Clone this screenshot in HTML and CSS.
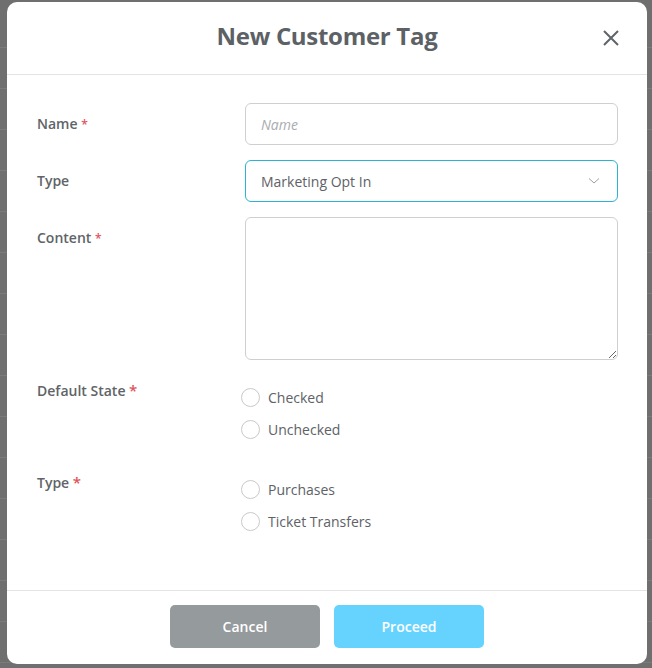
FILE: index.html
```html
<!DOCTYPE html>
<html lang="en">
<head>
  <meta charset="UTF-8">
  <title>New Customer Tag</title>
  <link rel="stylesheet" href="styles.css">
</head>
<body>
  <div class="modal">
    <div class="modal-header">
      <h2>New Customer Tag</h2>
      <span class="close">
        <svg width="16" height="16" viewBox="0 0 16 16"><path d="M1 1 L15 15 M15 1 L1 15" stroke="#5f6468" stroke-width="2" fill="none"/></svg>
      </span>
    </div>
    <div class="modal-body">
      <div class="row">
        <label>Name <span class="req">*</span></label>
        <input type="text" placeholder="Name">
      </div>
      <div class="row">
        <label>Type</label>
        <div class="select">
          <span>Marketing Opt In</span>
          <svg width="12" height="8" viewBox="0 0 12 8"><path d="M1 1.5 L6 6 L11 1.5" stroke="#9aa0a4" stroke-width="1" fill="none"/></svg>
        </div>
      </div>
      <div class="row">
        <label>Content <span class="req">*</span></label>
        <textarea></textarea>
      </div>
      <div class="row radios-row">
        <label>Default State <span class="req big">*</span></label>
        <div class="radios">
          <div class="radio"><span class="circle"></span>Checked</div>
          <div class="radio"><span class="circle"></span>Unchecked</div>
        </div>
      </div>
      <div class="row radios-row">
        <label>Type <span class="req big">*</span></label>
        <div class="radios">
          <div class="radio"><span class="circle"></span>Purchases</div>
          <div class="radio"><span class="circle"></span>Ticket Transfers</div>
        </div>
      </div>
    </div>
    <div class="modal-footer">
      <button class="btn cancel">Cancel</button>
      <button class="btn proceed">Proceed</button>
    </div>
  </div>
</body>
</html>
```

FILE: styles.css
```css
body {
  margin: 0;
  height: 668px;
  overflow: hidden;
  font-family: "Open Sans", sans-serif;
  background-color: #6f6f6f;
  background-image: repeating-linear-gradient(to bottom, transparent 0, transparent 40px, #7b7b7b 40px, #7b7b7b 41px);
  background-position: 0 7px;
}
.modal {
  margin: 2px 5px 0 7px;
  height: 662px;
  background: #fff;
  border-radius: 10px;
  display: flex;
  flex-direction: column;
}
.modal-header {
  height: 73px;
  flex: none;
  box-sizing: border-box;
  padding-bottom: 6px;
  border-bottom: 1px solid #e3e3e3;
  display: flex;
  align-items: center;
  justify-content: center;
  position: relative;
}
.modal-header h2 {
  margin: 0;
  font-size: 24px;
  font-weight: 700;
  color: #5c6165;
  letter-spacing: -0.3px;
}
.close {
  position: absolute;
  right: 28px;
  top: 28px;
  line-height: 0;
}
.modal-body {
  flex: 1;
  padding: 28px 29px 0 30px;
}
.row {
  display: flex;
  align-items: flex-start;
  margin-bottom: 15px;
}
.row label {
  width: 208px;
  flex: none;
  font-size: 14px;
  font-weight: 600;
  color: #606468;
  padding-top: 11px;
}
.req {
  color: #e0525a;
  font-size: 12px;
}
.req.big {
  font-size: 15px;
}
input[type="text"], .select, textarea {
  flex: 1;
  box-sizing: border-box;
  border: 1px solid #cfcfcf;
  border-radius: 6px;
  font-family: "Open Sans", sans-serif;
  font-size: 14px;
  color: #5e6266;
  background: #fff;
}
input[type="text"] {
  height: 42px;
  padding: 0 15px;
}
input::placeholder {
  color: #a8acaf;
  font-style: italic;
}
.select {
  height: 42px;
  padding: 0 17px 0 15px;
  border-color: #2ab3d3;
  display: flex;
  align-items: center;
  justify-content: space-between;
}
textarea {
  height: 143px;
  resize: vertical;
  margin: 0;
  display: block;
}
.radios-row {
  margin-top: 12px;
  margin-bottom: 0;
}
.radios-row label {
  padding-top: 5px;
}
.radios-row + .radios-row {
  margin-top: 22px;
}
.radios {
  margin-left: -4px;
  padding-top: 6px;
}
.radio {
  display: flex;
  align-items: center;
  height: 32px;
  font-size: 14px;
  color: #5e6266;
}
.circle {
  width: 19px;
  height: 19px;
  border: 1px solid #c9c9c9;
  border-radius: 50%;
  box-sizing: border-box;
  margin-right: 8px;
}
.modal-footer {
  height: 74px;
  flex: none;
  border-top: 1px solid #e3e3e3;
  display: flex;
  justify-content: center;
  align-items: flex-start;
  gap: 14px;
  padding-top: 14px;
  box-sizing: border-box;
}
.btn {
  width: 150px;
  height: 43px;
  border: none;
  border-radius: 5px;
  color: #fff;
  font-family: "Open Sans", sans-serif;
  font-size: 14px;
  font-weight: 600;
}
.cancel {
  background: #959a9d;
}
.proceed {
  background: #66d3fe;
}
```
